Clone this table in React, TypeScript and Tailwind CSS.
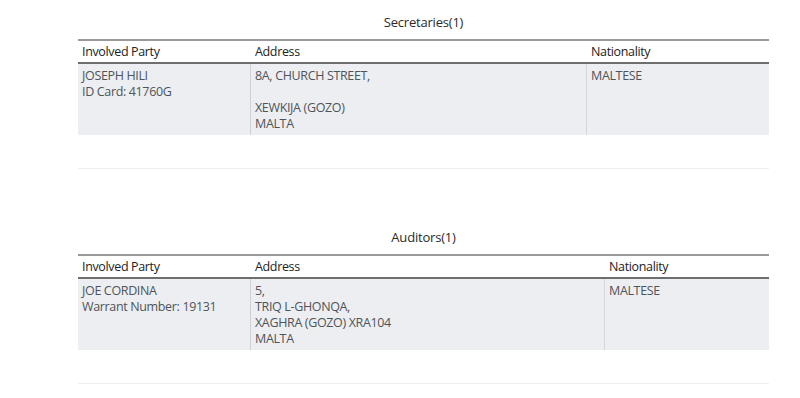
import React from "react";

type Row = { party: string[]; address: string[]; nationality: string };
type Section = { title: string; widths: [number, number, number]; rows: Row[] };

const sections: Section[] = [
  {
    title: "Secretaries(1)",
    widths: [172, 336, 183],
    rows: [
      {
        party: ["JOSEPH HILI", "ID Card: 41760G"],
        address: ["8A, CHURCH STREET,", "", "XEWKIJA (GOZO)", "MALTA"],
        nationality: "MALTESE",
      },
    ],
  },
  {
    title: "Auditors(1)",
    widths: [172, 354, 165],
    rows: [
      {
        party: ["JOE CORDINA", "Warrant Number: 19131"],
        address: ["5,", "TRIQ L-GHONQA,", "XAGHRA (GOZO) XRA104", "MALTA"],
        nationality: "MALTESE",
      },
    ],
  },
];

function Lines({ lines }: { lines: string[] }) {
  return (
    <>
      {lines.map((l, i) => (
        <div key={i} className="h-4 whitespace-nowrap">
          {l}
        </div>
      ))}
    </>
  );
}

function Block({ s }: { s: Section }) {
  const [w1, w2, w3] = s.widths;
  return (
    <div>
      <div className="h-4 text-center text-[13px] leading-4 tracking-[-0.2px] text-[#2a2a2a]">{s.title}</div>
      <div className="mt-[9px] h-[2px] bg-[#9a9a9a]" />
      <div className="flex h-[21px] items-center text-[12.5px] leading-4 tracking-[-0.35px] text-[#222]">
        <div className="shrink-0 pl-1 font-medium" style={{ width: w1 }}>
          Involved Party
        </div>
        <div className="shrink-0 pl-[5px] font-medium" style={{ width: w2 }}>
          Address
        </div>
        <div className="shrink-0 pl-[5px] font-medium" style={{ width: w3 }}>
          Nationality
        </div>
      </div>
      <div className="h-[2px] bg-[#6e6e6e]" />
      {s.rows.map((r, i) => (
        <div key={i} className="flex h-[71px] bg-[#eceef1] text-[12.5px] leading-4 tracking-[-0.35px] text-[#4f545a]">
          <div className="shrink-0 pl-1 pt-1" style={{ width: w1 }}>
            <Lines lines={r.party} />
          </div>
          <div className="shrink-0 border-l border-l-[#cdd0d5] pl-1 pt-1" style={{ width: w2 }}>
            <Lines lines={r.address} />
          </div>
          <div className="shrink-0 border-l border-l-[#d3d6da] pl-1 pt-1" style={{ width: w3 }}>
            <Lines lines={[r.nationality]} />
          </div>
        </div>
      ))}
      <div className="mt-[33px] h-px bg-[#eeeff1]" />
    </div>
  );
}

export default function App() {
  return (
    <div
      className="h-[398px] w-[800px] overflow-hidden bg-white pt-[14px] pl-[78px] pr-[31px]"
      style={{ fontFamily: '"Open Sans", "Noto Sans", sans-serif' }}
    >
      <div className="flex flex-col gap-[60px]">
        {sections.map((s) => (
          <Block key={s.title} s={s} />
        ))}
      </div>
    </div>
  );
}
